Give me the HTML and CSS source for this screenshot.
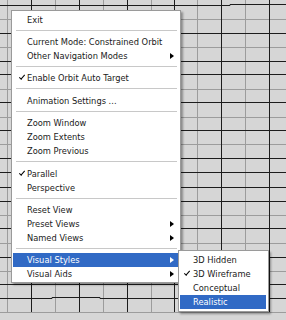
FILE: index.html
```html
<!DOCTYPE html>
<html lang="en">
<head>
    <meta charset="UTF-8">
    <meta name="viewport" content="width=device-width, initial-scale=1.0">
    <title>Orbit context menu</title>
    <link rel="stylesheet" href="styles.css">
</head>
<body>
    <div class="viewport">
        <!-- wireframe grid drawn in the viewport -->
        <svg class="grid" width="286" height="320" viewBox="0 0 286 320">
            <g class="minor">
                <line x1="7.5" y1="0" x2="7.5" y2="312"/>
                <line x1="55.5" y1="0" x2="55.5" y2="312"/>
                <line x1="103.5" y1="0" x2="103.5" y2="312"/>
                <line x1="151.5" y1="0" x2="151.5" y2="312"/>
                <line x1="197.5" y1="0" x2="197.5" y2="312"/>
                <line x1="245.5" y1="0" x2="245.5" y2="312"/>
                <line x1="0" y1="19.5" x2="286" y2="19.5"/>
                <line x1="0" y1="47.5" x2="286" y2="47.5"/>
                <line x1="0" y1="89.5" x2="286" y2="89.5"/>
                <line x1="0" y1="117.5" x2="286" y2="117.5"/>
                <line x1="0" y1="144.5" x2="286" y2="144.5"/>
                <line x1="0" y1="215.5" x2="286" y2="215.5"/>
                <line x1="0" y1="243.5" x2="286" y2="243.5"/>
                <line x1="0" y1="271.5" x2="286" y2="271.5"/>
                <line x1="0" y1="312.5" x2="286" y2="312.5"/>
            </g>
            <g class="major">
                <line x1="31.5" y1="0" x2="31.5" y2="312"/>
                <line x1="79.5" y1="0" x2="79.5" y2="312"/>
                <line x1="127.5" y1="0" x2="127.5" y2="312"/>
                <line x1="174.5" y1="0" x2="174.5" y2="312"/>
                <line x1="221.5" y1="0" x2="221.5" y2="312"/>
                <line x1="269.5" y1="0" x2="269.5" y2="312"/>
                <polyline points="0,5.5 230,5.5 230,4.5 286,4.5"/>
                <line x1="0" y1="33.5" x2="286" y2="33.5"/>
                <line x1="0" y1="61.5" x2="286" y2="61.5"/>
                <line x1="0" y1="74.5" x2="286" y2="74.5"/>
                <line x1="0" y1="102.5" x2="286" y2="102.5"/>
                <line x1="0" y1="130.5" x2="286" y2="130.5"/>
                <line x1="0" y1="158.5" x2="286" y2="158.5"/>
                <line x1="0" y1="172.5" x2="286" y2="172.5"/>
                <line x1="0" y1="187.5" x2="286" y2="187.5"/>
                <line x1="0" y1="201.5" x2="286" y2="201.5"/>
                <line x1="0" y1="228.5" x2="286" y2="228.5"/>
                <line x1="0" y1="257.5" x2="286" y2="257.5"/>
                <line x1="0" y1="284.5" x2="286" y2="284.5"/>
                <polyline points="0,298.5 52,298.5 52,297.5 100,297.5 100,298.5 286,298.5"/>
            </g>
        </svg>

        <ul class="menu main-menu">
            <li class="item"><span class="label">Exit</span></li>
            <li class="sep"></li>
            <li class="item"><span class="label">Current Mode: Constrained Orbit</span></li>
            <li class="item"><span class="label">Other Navigation Modes</span><span class="arrow"></span></li>
            <li class="sep"></li>
            <li class="item checked"><span class="label">Enable Orbit Auto Target</span></li>
            <li class="sep wide"></li>
            <li class="item"><span class="label">Animation Settings ...</span></li>
            <li class="sep"></li>
            <li class="item"><span class="label">Zoom Window</span></li>
            <li class="item"><span class="label">Zoom Extents</span></li>
            <li class="item"><span class="label">Zoom Previous</span></li>
            <li class="sep wide"></li>
            <li class="item checked"><span class="label">Parallel</span></li>
            <li class="item"><span class="label">Perspective</span></li>
            <li class="sep"></li>
            <li class="item"><span class="label">Reset View</span></li>
            <li class="item"><span class="label">Preset Views</span><span class="arrow"></span></li>
            <li class="item"><span class="label">Named Views</span><span class="arrow"></span></li>
            <li class="sep"></li>
            <li class="item active"><span class="label">Visual Styles</span><span class="arrow"></span></li>
            <li class="item"><span class="label">Visual Aids</span><span class="arrow"></span></li>
        </ul>

        <ul class="menu sub-menu">
            <li class="item"><span class="label">3D Hidden</span></li>
            <li class="item checked"><span class="label">3D Wireframe</span></li>
            <li class="item"><span class="label">Conceptual</span></li>
            <li class="item active"><span class="label">Realistic</span></li>
        </ul>
    </div>
</body>
</html>
```

FILE: styles.css
```css
body {
    margin: 0;
    padding: 0;
    font-family: "DejaVu Sans", "Liberation Sans", sans-serif;
}

.viewport {
    position: relative;
    width: 286px;
    height: 320px;
    overflow: hidden;
    background-color: #d6d6d6;
}

.grid {
    display: block;
}

.grid line,
.grid polyline {
    fill: none;
    stroke-width: 1;
}

.grid .minor line {
    stroke: #9c9c9c;
}

.grid .major line,
.grid .major polyline {
    stroke: #1c1c1c;
}

.menu {
    position: absolute;
    margin: 0;
    padding: 2px 0;
    list-style: none;
    background: #fff;
    border: 1px solid #9a9a9a;
    box-shadow: 2px 2px 2px rgba(0, 0, 0, 0.35);
    font-size: 8.3px;
    color: #1a1a1a;
}

.main-menu {
    left: 11px;
    top: 10px;
    width: 168px;
    padding-bottom: 1px;
}

.sub-menu {
    left: 178px;
    top: 250px;
    width: 89px;
}

.item {
    position: relative;
    display: flex;
    align-items: center;
    height: 14px;
    margin: 0 2px 0 1px;
    padding: 0 4px 0 14px;
    white-space: nowrap;
}

.sub-menu .item {
    padding-left: 13px;
}

.item.checked::before {
    content: "";
    position: absolute;
    left: 6px;
    top: 4px;
    width: 5px;
    height: 2px;
    border-left: 1.5px solid #000;
    border-bottom: 1.5px solid #000;
    transform: rotate(-50deg);
}

.sub-menu .item.checked::before {
    left: 4px;
}

.label {
    flex: 1;
}

.arrow {
    width: 0;
    height: 0;
    border-left: 4px solid #000;
    border-top: 3.5px solid transparent;
    border-bottom: 3.5px solid transparent;
}

.item.active {
    background-color: #316ac5;
    color: #fff;
}

.item.active .arrow {
    border-left-color: #fff;
}

.sep {
    height: 8px;
    position: relative;
}

.sep.wide {
    height: 9px;
}

.sep::after {
    content: "";
    position: absolute;
    left: 4px;
    right: 3px;
    top: 3px;
    height: 1px;
    background-color: #c8c8c8;
}
```
